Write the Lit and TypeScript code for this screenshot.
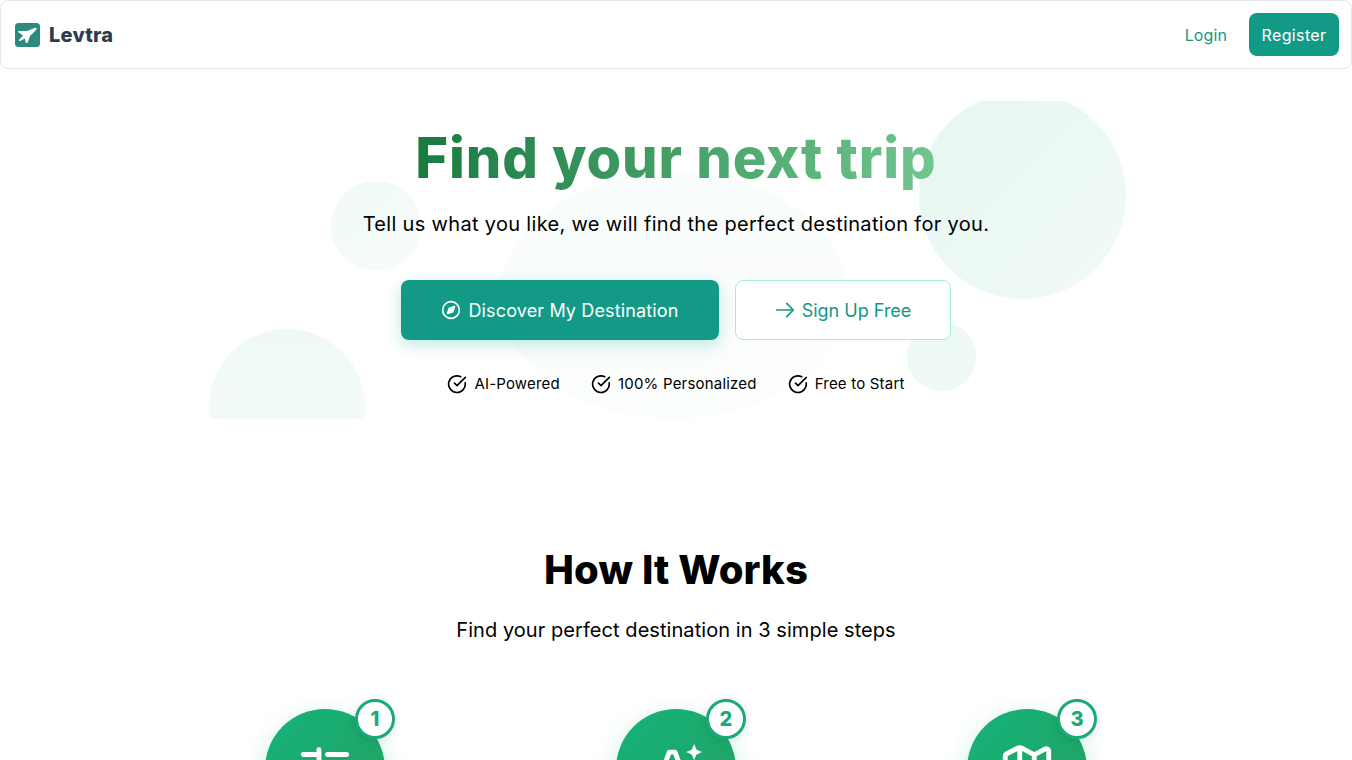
import { LitElement, html, css, svg } from "lit";
import { customElement } from "lit/decorators.js";

const check = svg`<path d="M21.8 10.5A10 10 0 1 1 16.5 3.3"/><path d="m9 11 3 3L22 4"/>`;

const features = ["AI-Powered", "100% Personalized", "Free to Start"];

const stepIcons = [
  svg`<path d="M3 6h6.500M9.500 4v4M13 6h8M3 12h9M16 12h5M16 10v4M3 18h5M12 18h9M8 16v4"/>`,
  svg`<path d="M3 22 9.200 5h2.400L18 22M5.500 16h10"/><path fill="#fff" stroke="none" d="M19.500 1.700l1 2.300 2.300 1-2.300 1-1 2.300-1-2.300-2.300-1 2.300-1z"/>`,
  svg`<path d="M14.100 5.600a2 2 0 0 0 1.800 0l3.700-1.900A1 1 0 0 1 21 4.600v12.800a1 1 0 0 1-.6.900l-4.500 2.300a2 2 0 0 1-1.800 0l-4.200-2.100a2 2 0 0 0-1.800 0l-3.700 1.900A1 1 0 0 1 3 19.500V6.600a1 1 0 0 1 .6-.9l4.500-2.300a2 2 0 0 1 1.800 0zM15 6v15M9 3.500v15"/>`,
];

@customElement("app-root")
export class AppRoot extends LitElement {
  static styles = css`
    :host {
      display: block;
      height: 760px;
      overflow: hidden;
      background: #fff;
      color: #000;
      font-family: Inter, "Open Sans", sans-serif;
    }
    svg { display: block; flex: none; }
    .nav {
      height: 69px;
      box-sizing: border-box;
      border: 1px solid #e5e7eb;
      border-radius: 8px;
      display: flex;
      align-items: center;
      justify-content: space-between;
      padding: 0 12px 0 14px;
    }
    .brand { display: flex; align-items: center; gap: 9px; }
    .brand-name { font-size: 20px; font-weight: 800; color: #2d3b4e; letter-spacing: 0.2px; }
    .nav-actions { display: flex; align-items: center; gap: 22px; }
    .login { font-size: 16px; color: #0f9888; letter-spacing: 0.1px; }
    .register {
      width: 90px; height: 43px; display: flex; align-items: center; justify-content: center;
      background: #139a87; color: #fff; font-size: 16px; border-radius: 8px; letter-spacing: 0.35px;
    }
    .hero {
      position: relative;
      overflow: hidden;
      width: 936px;
      height: 318px;
      margin: 32px auto 0;
      display: flex;
      flex-direction: column;
      align-items: center;
    }
    .blob { position: absolute; border-radius: 50%; }
    .b1 { left: 711px; top: -9px; width: 207px; height: 207px; background: linear-gradient(135deg, #e6f6f0, #f1faf7); }
    .b2 { left: 123px; top: 80px; width: 90px; height: 90px; background: linear-gradient(135deg, #f1faf7, #f6fcfa); }
    .b3 { left: 699px; top: 221px; width: 69px; height: 69px; background: #eef8f5; }
    .b4 { left: 1px; top: 228px; width: 156px; height: 156px; background: linear-gradient(180deg, #eef9f5, #f6fcfa); }
    .b5 { left: 292px; top: 71px; width: 348px; height: 247px; background: linear-gradient(180deg, #f8fcfb, #fbfefd); }
    .hero > :not(.blob) { position: relative; }
    h1 {
      margin: 24px 0 0;
      font-size: 56px;
      line-height: 66px;
      font-weight: 800;
      letter-spacing: 0.9px;
      background: linear-gradient(100deg, #18793e, #72c78f);
      -webkit-background-clip: text;
      background-clip: text;
      color: transparent;
    }
    .tag { margin: 18px 0 0; font-size: 20px; line-height: 30px; letter-spacing: 0.32px; }
    .cta { display: flex; gap: 16px; margin-top: 41px; }
    .btn {
      height: 60px; box-sizing: border-box; display: flex; align-items: center; justify-content: center;
      gap: 7px; border-radius: 8px; font-size: 18px;
    }
    .primary { width: 318px; background: #139a87; color: #fff; letter-spacing: 0.14px; box-shadow: 0 4px 14px rgba(45, 212, 191, 0.3), 0 8px 24px rgba(0, 0, 0, 0.04); }
    .secondary { width: 216px; background: #fff; color: #0f9888; border: 1px solid #a5ece0; }
    .features { display: flex; gap: 31px; margin-top: 33px; font-size: 15px; line-height: 22px; letter-spacing: 0.2px; }
    .feature { display: flex; align-items: center; gap: 7px; }
    .how { text-align: center; margin-top: 121px; }
    h2 { margin: 0; font-size: 40px; line-height: 60px; font-weight: 800; letter-spacing: 0.1px; }
    .sub { margin: 15px 0 0; font-size: 20px; line-height: 30px; letter-spacing: 0.06px; }
    .steps {
      display: grid;
      grid-template-columns: repeat(3, 120px);
      justify-content: center;
      column-gap: 231px;
      margin-top: 64px;
    }
    .disc {
      position: relative;
      width: 120px; height: 120px; border-radius: 50%;
      background: linear-gradient(135deg, #14b37a, #259f5f);
      box-shadow: 0 8px 24px rgba(16, 185, 129, 0.25);
      display: flex; align-items: center; justify-content: center;
    }
    .badge {
      position: absolute; top: -10px; right: -10px; width: 40px; height: 40px; box-sizing: border-box;
      border: 3px solid #18ab7a; border-radius: 50%; background: #fff; color: #18ab7a;
      display: flex; align-items: center; justify-content: center; font-size: 20px; font-weight: 800;
      box-shadow: 0 2px 8px rgba(0,0,0,.1);
    }
  `;

  render() {
    return html`
      <nav class="nav">
        <div class="brand">
          <svg width="25" height="24" viewBox="0 0 25 24">
            <rect width="25" height="24" rx="3.500" fill="#2a8a7c"/>
            <path fill="#fff" d="M21.500 5c.5 1-.5 2-1.500 3l-5 5-2.500 7-2-.5-.5-4-5 2.500-1.500-.5L8 12.500 3 9l.5-1H12l7-2.800c1-.4 2-.6 2.500-.2z"/>
          </svg>
          <span class="brand-name">Levtra</span>
        </div>
        <div class="nav-actions">
          <span class="login">Login</span>
          <span class="register">Register</span>
        </div>
      </nav>
      <section class="hero">
        <div class="blob b5"></div>
        <div class="blob b1"></div>
        <div class="blob b2"></div>
        <div class="blob b3"></div>
        <div class="blob b4"></div>
        <h1>Find your next trip</h1>
        <p class="tag">Tell us what you like, we will find the perfect destination for you.</p>
        <div class="cta">
          <div class="btn primary">
            <svg width="20" height="20" viewBox="0 0 24 24" fill="none" stroke="#fff" stroke-width="2" stroke-linecap="round" stroke-linejoin="round">
              <circle cx="12" cy="12" r="10"/><path fill="#fff" d="m16.200 7.800-2.100 6.300-6.300 2.100 2.100-6.300z"/>
            </svg>
            Discover My Destination
          </div>
          <div class="btn secondary">
            <svg width="20" height="20" viewBox="0 0 24 24" fill="none" stroke="#0f9888" stroke-width="2" stroke-linecap="round" stroke-linejoin="round">
              <path d="M2 12h20M14 4l8 8-8 8"/>
            </svg>
            Sign Up Free
          </div>
        </div>
        <div class="features">
          ${features.map(
            (f) => html`<div class="feature">
              <svg width="20" height="20" viewBox="0 0 24 24" fill="none" stroke="#000" stroke-width="2" stroke-linecap="round" stroke-linejoin="round">${check}</svg>
              ${f}
            </div>`
          )}
        </div>
      </section>
      <section class="how">
        <h2>How It Works</h2>
        <p class="sub">Find your perfect destination in 3 simple steps</p>
        <div class="steps">
          ${stepIcons.map(
            (icon, i) => html`<div class="disc">
              <svg width="58" height="58" viewBox="0 0 24 24" fill="none" stroke="#fff" stroke-width="2" stroke-linecap="round" stroke-linejoin="round">${icon}</svg>
              <span class="badge">${i + 1}</span>
            </div>`
          )}
        </div>
      </section>
    `;
  }
}
